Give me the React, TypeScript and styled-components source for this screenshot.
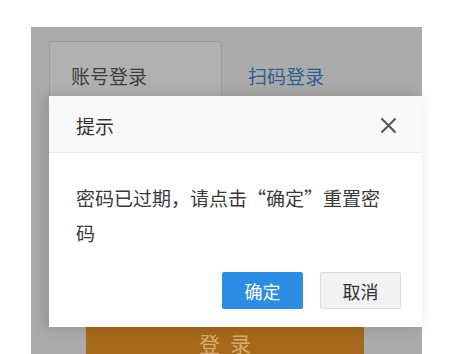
import React from 'react';
import styled, {createGlobalStyle} from 'styled-components';

const GlobalStyle = createGlobalStyle`
  html, body {
    margin: 0;
    padding: 0;
    background: #fff;
    overflow: hidden;
    font-family: "Noto Sans CJK SC", "Noto Sans", sans-serif;
  }
`;

const Page = styled.div`
  padding: 27px 0 0 31px;
`;

const LoginPanel = styled.div`
  position: relative;
  width: 391px;
  height: 346px;
  box-sizing: border-box;
  padding: 14px 0 0 18px;
  background: #ababab;
  display: flex;
  flex-direction: column;
`;

const Tabs = styled.div`
  display: flex;
  align-items: flex-start;
`;

const Tab = styled.div<{$active?: boolean}>`
  width: 173px;
  height: 70px;
  box-sizing: border-box;
  padding: 20px 0 0 ${p => (p.$active ? 21 : 25)}px;
  font-size: 19px;
  line-height: 28px;
  color: ${p => (p.$active ? '#3e3e3e' : '#2c5f94')};
  background: ${p => (p.$active ? '#b1b1b1' : 'transparent')};
  border: 1px solid ${p => (p.$active ? '#9c9c9c' : 'transparent')};
  border-bottom: none;
  border-radius: 4px 4px 0 0;
`;

const LoginButton = styled.div`
  margin: auto 0 0 37px;
  width: 278px;
  height: 46px;
  box-sizing: border-box;
  padding-top: 2px;
  background: #a6691c;
  color: #dcab6a;
  font-size: 21px;
  line-height: 28px;
  letter-spacing: 10px;
  text-indent: 10px;
  text-align: center;
`;

const Dialog = styled.div`
  position: absolute;
  left: 18px;
  top: 69px;
  width: 373px;
  background: #fff;
  box-shadow: -4px 0 14px rgba(0, 0, 0, 0.16);
`;

const DialogHeader = styled.div`
  height: 57px;
  box-sizing: border-box;
  padding: 2px 25px 0 27px;
  display: flex;
  align-items: center;
  justify-content: space-between;
  background: #f8f8f8;
  border-bottom: 1px solid #ececec;
  font-size: 19px;
  color: #333;
`;

const CloseIcon = styled.svg`
  width: 17px;
  height: 17px;
  stroke: #555;
  stroke-width: 2;
  fill: none;
`;

const DialogBody = styled.div`
  padding: 27px 27px 0 27px;
  font-size: 19px;
  line-height: 35px;
  color: #3a3a3a;
`;

const DialogFooter = styled.div`
  display: flex;
  justify-content: flex-end;
  gap: 17px;
  padding: 22px 21px 18px 0;
`;

const Button = styled.button<{$primary?: boolean}>`
  width: 81px;
  height: 37px;
  box-sizing: border-box;
  font-family: inherit;
  font-size: 18px;
  border-radius: 2px;
  padding: 0;
  color: ${p => (p.$primary ? '#fff' : '#333')};
  background: ${p => (p.$primary ? '#2d8ce3' : '#f2f2f2')};
  border: 1px solid ${p => (p.$primary ? '#2d8ce3' : '#dcdcdc')};
`;

export default function App() {
  return (
    <Page>
      <GlobalStyle />
      <LoginPanel>
        <Tabs>
          <Tab $active>账号登录</Tab>
          <Tab>扫码登录</Tab>
        </Tabs>
        <LoginButton>登录</LoginButton>
        <Dialog>
          <DialogHeader>
            <span>提示</span>
            <CloseIcon viewBox="0 0 17 17">
              <path d="M1.5 1.5 L15.5 15.5 M15.5 1.5 L1.5 15.5" />
            </CloseIcon>
          </DialogHeader>
          <DialogBody>密码已过期，请点击“确定”重置密码</DialogBody>
          <DialogFooter>
            <Button $primary>确定</Button>
            <Button>取消</Button>
          </DialogFooter>
        </Dialog>
      </LoginPanel>
    </Page>
  );
}
